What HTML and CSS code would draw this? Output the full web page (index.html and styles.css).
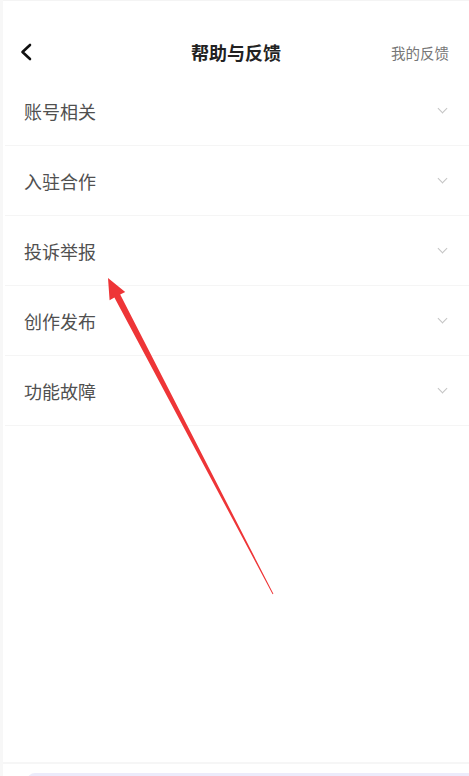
FILE: index.html
```html
<!DOCTYPE html>
<html lang="zh-CN">
<head>
    <meta charset="UTF-8">
    <meta name="viewport" content="width=device-width, initial-scale=1.0">
    <title>帮助与反馈</title>
    <link rel="stylesheet" href="styles.css">
</head>
<body>

    <div class="page">
        <div class="status-bar"></div>

        <header class="nav">
            <button class="back" aria-label="返回">
                <svg width="14" height="18" viewBox="0 0 14 18">
                    <path d="M11 2 L3.5 9 L11 16" fill="none" stroke="#111" stroke-width="2.6" stroke-linecap="round" stroke-linejoin="round"/>
                </svg>
            </button>
            <h1 class="title">帮助与反馈</h1>
            <a class="my-feedback" href="#">我的反馈</a>
        </header>

        <ul class="faq">
            <li class="faq-item"><span>账号相关</span><i class="chevron"></i></li>
            <li class="faq-item"><span>入驻合作</span><i class="chevron"></i></li>
            <li class="faq-item"><span>投诉举报</span><i class="chevron"></i></li>
            <li class="faq-item"><span>创作发布</span><i class="chevron"></i></li>
            <li class="faq-item"><span>功能故障</span><i class="chevron"></i></li>
        </ul>

        <div class="spacer"></div>

        <footer class="bottom">
            <div class="bottom-bar"></div>
        </footer>

        <!-- red pointer arrow drawn over the list -->
        <svg class="pointer" width="469" height="776" viewBox="0 0 469 776">
            <polygon fill="#ee3537" points="108,278 125.2,292 120.2,294.4 273.4,593.8 272.6,594.2 114.4,297.4 109.6,300.2"/>
        </svg>
    </div>

</body>
</html>
```

FILE: styles.css
```css
* {
    margin: 0;
    padding: 0;
    box-sizing: border-box;
}

body {
    font-family: "Noto Sans CJK SC", "Noto Sans", sans-serif;
    background-color: #fff;
    color: #222;
}

.page {
    position: relative;
    width: 469px;
    height: 776px;
    display: flex;
    flex-direction: column;
    overflow: hidden;
    border-left: 3px solid #f7f7f7;
}

.status-bar {
    height: 28px;
    border-top: 1px solid #f4f4f4;
}

.nav {
    height: 48px;
    display: grid;
    grid-template-columns: 1fr auto 1fr;
    align-items: center;
    padding: 0 20px 0 16px;
}

.back {
    justify-self: start;
    background: none;
    border: none;
    display: flex;
    align-items: center;
    cursor: pointer;
}

.title {
    font-size: 18px;
    font-weight: 700;
    color: #222;
    letter-spacing: 0;
    margin-left: 4px;
}

.my-feedback {
    justify-self: end;
    font-size: 14.5px;
    color: #777;
    text-decoration: none;
}

.faq {
    list-style: none;
}

.faq-item {
    height: 70px;
    display: flex;
    align-items: center;
    justify-content: space-between;
    padding: 0 23px 0 19px;
    border-bottom: 1px solid #f5f5f5;
    margin-left: 2px;
    font-size: 18px;
    color: #505050;
}

.chevron {
    width: 7px;
    height: 7px;
    border-right: 1.3px solid #c4c4c4;
    border-bottom: 1.3px solid #c4c4c4;
    transform: rotate(45deg);
    margin-top: -4px;
}

.spacer {
    flex: 1;
}

.bottom {
    height: 14px;
    border-top: 2px solid #f6f6f6;
    padding: 9px 0 0 24px;
}

.bottom-bar {
    height: 10px;
    background-color: #ecebfb;
    border-radius: 8px 0 0 0;
}

.pointer {
    position: absolute;
    left: -3px;
    top: 0;
    pointer-events: none;
}
```
